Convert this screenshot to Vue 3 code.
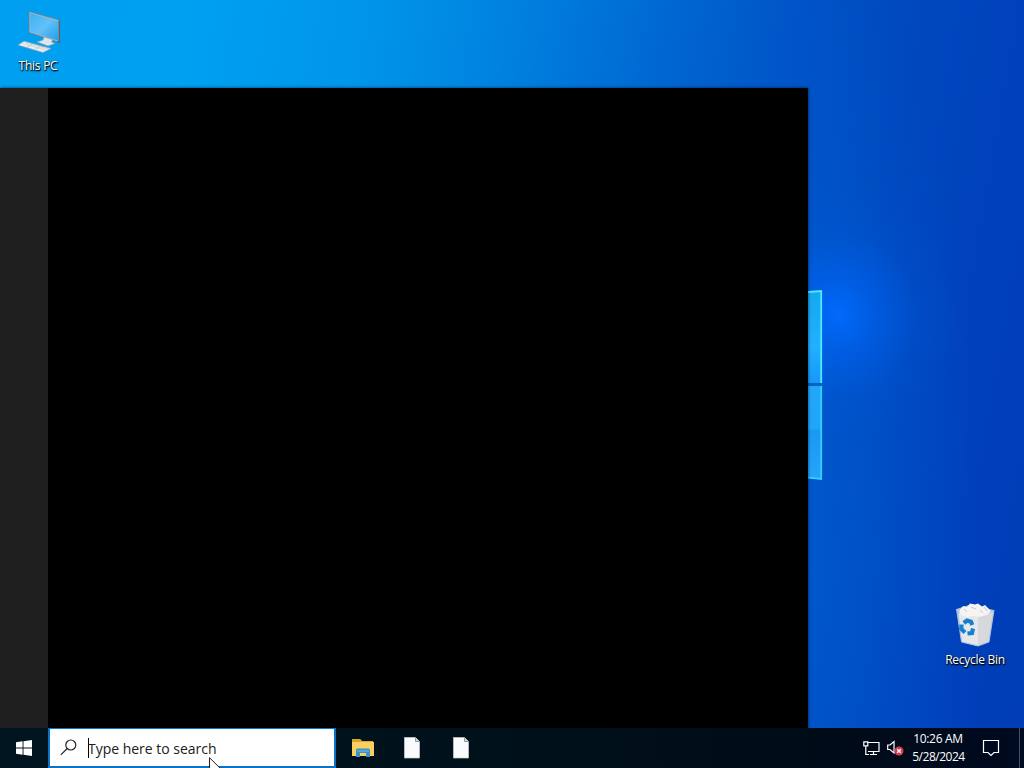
<script setup>
const documents = ['Document one', 'Document two']
</script>

<template>
  <main class="desktop">
    <div class="pane-logo">
      <svg width="16" height="192" viewBox="0 0 16 192">
        <defs>
          <linearGradient id="paneTop" x1="0" y1="0" x2="0" y2="1">
            <stop offset="0" stop-color="#12a9ee" /><stop offset=".6" stop-color="#22b0ff" /><stop offset="1" stop-color="#1698fa" />
          </linearGradient>
          <linearGradient id="paneBottom" x1="0" y1="0" x2="0" y2="1">
            <stop offset="0" stop-color="#20a7fa" /><stop offset=".46" stop-color="#1fa5fb" /><stop offset=".48" stop-color="#1b98f4" /><stop offset="1" stop-color="#24a5fb" />
          </linearGradient>
        </defs>
        <path d="M0 3L14 2V94H0Z" fill="url(#paneTop)" />
        <path d="M0 97H14V190L0 189Z" fill="url(#paneBottom)" />
        <path d="M0 3L13.2 2V94" fill="none" stroke="#4deaff" stroke-width="1.8" />
        <path d="M13.2 97V190L0 188.7" fill="none" stroke="#36cfff" stroke-width="1.8" />
        <path d="M0 95.5H15" stroke="#0863bc" stroke-width="3" />
      </svg>
    </div>
    <div class="shortcut computer">
      <svg width="48" height="48" viewBox="0 0 48 48">
        <defs><linearGradient id="screen" x1="0" y1="0" x2="1" y2="1"><stop stop-color="#3fb1f2" /><stop offset=".5" stop-color="#63c0f8" /><stop offset="1" stop-color="#219eeb" /></linearGradient></defs>
        <path d="M14 3.5L44.5 12V34.5L14 24.5Z" fill="#9fb8c6" stroke="#5e8098" stroke-width=".8" />
        <path d="M15.2 5.2L43 13V32.6L15.2 23.5Z" fill="url(#screen)" />
        <path d="M44.2 12.5V34L42.5 33.5" fill="none" stroke="#4d6069" stroke-width="1.4" />
        <path d="M29 29L38 31.8L36.5 34L40 35.5L33 38L22 34L28 32Z" fill="#dce5ea" stroke="#879eac" stroke-width=".6" />
        <path d="M9 33.2L36 40.5L28 44.5L3 37Z" fill="#edf2f5" stroke="#8fa4b1" stroke-width=".8" />
        <path d="M7.5 35.5L30 42M10.5 34.5L33 41M12 39L18 36M20 41.4L26 38.2" fill="none" stroke="#b8c6d0" stroke-width=".7" />
      </svg>
      <span>This PC</span>
    </div>
    <div class="shortcut recycle">
      <svg width="48" height="48" viewBox="0 0 48 48">
        <path d="M5.5 7L18 3L43 8L38 40L27 44L10.5 40Z" fill="#a9c3e2" />
        <path d="M7.5 11L27 14L27 43.5L11 39.5Z" fill="#e6e7ea" />
        <path d="M27 14L42 10L37.5 39.5L27 43.5Z" fill="#d6d8dc" />
        <path d="M8 9L12 4L16 5L19 1.5L24 2.5L27 1.5L31 4.5L34 3L40 9L36 13L28 15L22 14L16 15L10 13Z" fill="#f5f4f2" />
        <path d="M13 7L16 10M20 5L25 7M29 8L32 11M33 5L36 9" fill="none" stroke="#c8c9c9" />
        <path d="M5.5 7L10.5 40L27 44L38 40L43 8" fill="none" stroke="#b9cbe0" stroke-width=".9" />
        <g fill="none" stroke="#1680d0" stroke-width="4.2">
          <path d="M12.8 21L16 18.5L20 19.8L21.3 23" />
          <path d="M10.5 22.5L10.3 27L14 30.5" />
          <path d="M16.5 31.5L21 31L22 26.5" />
        </g>
      </svg>
      <span>Recycle Bin</span>
    </div>
    <section class="search-panel">
      <aside class="panel-rail"></aside>
      <div class="panel-content"></div>
    </section>
    <footer class="taskbar">
      <button class="start" aria-label="Start">
        <svg width="16" height="16" viewBox="0 0 16 16"><path fill="#fff" d="M0 2.2L6.6 1.3V7.5H0ZM7.5 1.2L16 0V7.5H7.5ZM0 8.5H6.6V14.7L0 13.8ZM7.5 8.5H16V16L7.5 14.8Z" /></svg>
      </button>
      <div class="search-box">
        <svg width="18" height="18" viewBox="0 0 18 18"><circle cx="10.8" cy="6" r="5" fill="none" stroke="#252525" stroke-width="1.2" /><path d="M7.2 9.5L.8 15.9" stroke="#252525" stroke-width="1.2" /></svg>
        <i class="caret"></i><span>Type here to search</span>
      </div>
      <nav class="apps">
        <button class="app explorer" aria-label="File Explorer">
          <svg width="22" height="20" viewBox="0 0 22 20"><path d="M0 1H8L10 3H21V18H0Z" fill="#e5a62b" /><path d="M0 4H22V18H0Z" fill="#f9cf60" /><path d="M0 1H8L9.5 3L8 4H0Z" fill="#dca128" /><path d="M4 19V12Q4 10.5 5.5 10.5H16.5Q18 10.5 18 12V19H14V15H8V19Z" fill="#3c92ca" /><path d="M5 13H17" stroke="#68b7df" stroke-width="1.2" /></svg>
        </button>
        <button v-for="name in documents" :key="name" class="app" :aria-label="name">
          <svg width="16" height="22" viewBox="0 0 16 22"><path d="M.4.5H11.5L15.5 4.5V21H.4Z" fill="#fafbfd" stroke="#c6ced3" stroke-width=".7" /><path d="M11.5.5V4.5H15.5" fill="#cfd6db" stroke="#78868c" stroke-width=".8" /></svg>
        </button>
      </nav>
      <div class="tray">
        <svg class="network" width="17" height="15" viewBox="0 0 17 15"><path d="M5 1.5H16V10.5H5M10.5 10.5V13.5M7 13.5H14M.8.8H4.8V4.8H.8ZM2.8 4.8V13.5H6" fill="none" stroke="#fff" stroke-width="1.2" /></svg>
        <svg class="volume" width="18" height="16" viewBox="0 0 18 16"><path d="M.7 5H3L7 1.5V13L3 9.5H.7Z" fill="none" stroke="#fff" stroke-width="1.2" /><circle cx="12" cy="11" r="4.5" fill="#d83b4b" /><path d="M10.2 9.2L13.8 12.8M13.8 9.2L10.2 12.8" stroke="#fff" stroke-width="1.4" /></svg>
        <div class="clock"><span>10:26 AM</span><span class="date">5/28/2024</span></div>
        <svg class="notice" width="18" height="18" viewBox="0 0 18 18"><path d="M1.5 1.5H16.5V13.5H12L9 16.5L6 13.5H1.5Z" fill="none" stroke="#fff" stroke-width="1.2" /></svg>
        <i class="show-desktop"></i>
      </div>
    </footer>
    <svg class="pointer" width="14" height="22" viewBox="0 0 14 22"><path d="M.5.7V18L4.5 14L7.4 21L10 20L7 13H13Z" fill="#fff" stroke="#222" /></svg>
  </main>
</template>

<style>
html, body { margin: 0; overflow: hidden; }
</style>

<style scoped>
* { box-sizing: border-box; }
svg { display: block; flex: none; }
button { padding: 0; border: 0; background: none; }
.desktop {
  position: relative; width: 1024px; height: 768px; overflow: hidden;
  display: flex; flex-direction: column; justify-content: flex-end;
  font-family: "Open Sans", "Noto Sans", sans-serif;
  background:
    radial-gradient(ellipse 120px 130px at 838px 315px, rgba(0,108,255,.9), rgba(0,102,248,.55) 28%, rgba(0,90,225,.16) 65%, transparent 100%),
    radial-gradient(ellipse 180px 620px at 800px 560px, rgba(0,98,212,.62), transparent),
    linear-gradient(100deg, #009fef 0%, #00a0f0 17%, #0095e9 32%, #0082e0 44%, #0069d3 57%, #0053c6 69%, #0047be 80%, #0040ba 91%, #003db7 100%);
}
.shortcut { position: absolute; width: 76px; display: flex; flex-direction: column; align-items: center; color: #fff; font-size: 12px; line-height: 16px; text-shadow: 0 1px 2px #000, 1px 1px 1px #000; }
.shortcut span { white-space: nowrap; margin-top: 2px; }
.computer { left: 0; top: 8px; letter-spacing: -.25px; }
.computer svg { margin-left: 2px; }
.recycle { left: 937px; top: 602px; letter-spacing: -.28px; }
.pane-logo { position: absolute; left: 808px; top: 289px; }
.search-panel { position: relative; width: 808px; height: 640px; display: flex; box-shadow: 0 0 3px rgba(0,0,0,.65); }
.panel-rail { width: 48px; background: #1f1f1f; }
.panel-content { flex: 1; background: #000; }
.taskbar { position: relative; height: 40px; flex: none; display: flex; background: linear-gradient(90deg, #001520, #001019 58%, #000b18 80%, #000a20); }
.start { width: 48px; display: flex; align-items: center; justify-content: center; }
.search-box { width: 288px; height: 40px; display: flex; align-items: center; padding-left: 10px; border: 2px solid #0873c9; border-top-width: 1.5px; background: #fff; color: #202020; font-size: 14px; white-space: nowrap; }
.search-box span { position: relative; top: 1px; margin-left: -1px; letter-spacing: -.02px; }
.caret { width: 1px; height: 20px; margin-left: 10px; background: #000; flex: none; }
.apps { display: flex; margin-left: 2px; }
.app { width: 49px; height: 40px; display: flex; align-items: center; justify-content: center; }
.tray { margin-left: auto; display: flex; align-items: center; color: #fff; }
.network { margin-right: 1px; }
.volume { margin-left: 6px; }
.clock { width: 66px; display: flex; flex-direction: column; align-items: center; font-size: 12px; line-height: 18px; letter-spacing: -.3px; }
.clock .date { letter-spacing: -.48px; position: relative; left: .5px; }
.notice { margin-left: 11px; }
.show-desktop { width: 1px; height: 40px; margin-left: 19px; margin-right: 4px; background: #455063; }
.pointer { position: absolute; left: 209px; top: 757px; }
</style>
